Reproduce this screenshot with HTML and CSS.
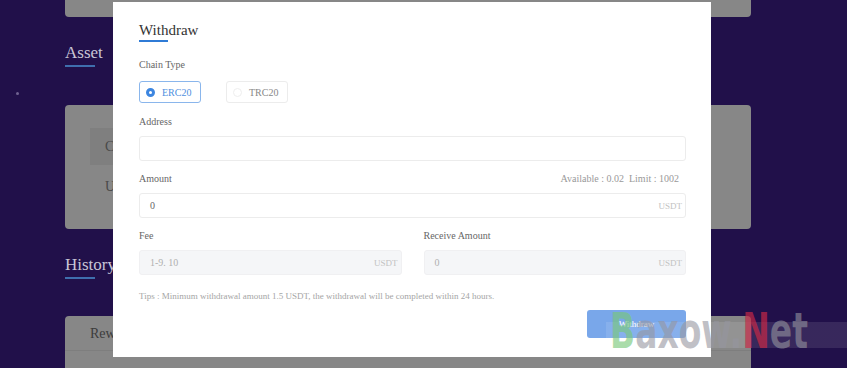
FILE: index.html
```html
<html>
<head>
<meta name="viewport" content="width=device-width, initial-scale=1">
<title>Withdraw</title>
<link rel="stylesheet" href="styles.css">
</head>
<body>

<div class="page">
	<div class="card card-top"></div>

	<div class="sec-title">Asset</div>
	<div class="sec-line"></div>
	<div class="card card-asset">
		<div class="asset-tab">Coin</div>
		<div class="asset-row">USDT</div>
	</div>

	<div class="sec-title">History</div>
	<div class="sec-line"></div>
	<div class="card card-history">
		<div class="history-head">Reward</div>
	</div>
</div>

<div class="star"></div>

<div class="modal">
	<div class="modal-title">Withdraw</div>
	<div class="title-line"></div>

	<div class="label first">Chain Type</div>
	<div class="chains">
		<div class="chain active"><span class="dot"></span>ERC20</div>
		<div class="chain"><span class="dot"></span>TRC20</div>
	</div>

	<div class="label">Address</div>
	<div class="input"></div>

	<div class="label split">
		<span>Amount</span>
		<span class="avail">Available : 0.02 &nbsp;Limit : 1002</span>
	</div>
	<div class="input"><span>0</span><span class="unit">USDT</span></div>

	<div class="pair">
		<div class="col">
			<div class="label">Fee</div>
			<div class="input disabled"><span class="muted">1-9. 10</span><span class="unit">USDT</span></div>
		</div>
		<div class="col">
			<div class="label">Receive Amount</div>
			<div class="input disabled"><span class="muted">0</span><span class="unit">USDT</span></div>
		</div>
	</div>

	<div class="tips">Tips : Minimum withdrawal amount 1.5 USDT, the withdrawal will be completed within 24 hours.</div>

	<div class="actions">
		<div class="btn">Withdraw</div>
	</div>
</div>

<div class="watermark">
	<svg width="241" height="66" viewBox="0 0 241 66">
		<text class="wm-text" x="4" y="50" textLength="198" lengthAdjust="spacingAndGlyphs"><tspan class="wm-b">B</tspan>axow.<tspan class="wm-n">N</tspan>et</text>
	</svg>
</div>

</body>
</html>
```

FILE: styles.css
```css
body {
	margin: 0;
	background-color: #21104a;
	font-family: "Liberation Serif", "Times New Roman", serif;
	width: 847px;
	height: 368px;
	overflow: hidden;
	position: relative;
}

.page {
	width: 686px;
	margin-left: 65px;
	height: 368px;
	overflow: hidden;
}

.card {
	background-color: #878787;
	border-radius: 4px;
}

.card-top {
	height: 17px;
	border-radius: 0 0 4px 4px;
}

.sec-title {
	color: #c9c6d6;
	font-size: 17px;
	line-height: 20px;
	margin-top: 26px;
}

.sec-line {
	width: 30px;
	height: 2px;
	margin-top: 2px;
	background-color: #3f6fae;
}

.card-asset {
	margin-top: 38px;
	height: 124px;
	padding: 23px 0 0 25px;
	box-sizing: border-box;
}

.asset-tab {
	width: 140px;
	height: 37px;
	background-color: #7f7f7f;
	color: #4a4a4a;
	font-size: 14px;
	line-height: 37px;
	padding-left: 15px;
	box-sizing: border-box;
}

.asset-row {
	color: #4a4a4a;
	font-size: 14px;
	margin-top: 14px;
	padding-left: 15px;
}

.card-history {
	margin-top: 37px;
	height: 60px;
	border-radius: 4px 4px 0 0;
}

.history-head {
	height: 34px;
	line-height: 36px;
	padding-left: 25px;
	color: #3c3c3c;
	font-size: 14px;
	border-bottom: 1px solid #7e7e7e;
}

.star {
	position: absolute;
	left: 16px;
	top: 92px;
	width: 3px;
	height: 3px;
	border-radius: 50%;
	background-color: #6f6290;
}

/* dialog */
.modal {
	position: absolute;
	left: 113px;
	top: 2px;
	width: 598px;
	height: 355px;
	box-sizing: border-box;
	padding: 18px 25px 0 26px;
	background-color: #fff;
}

.modal-title {
	font-size: 15px;
	line-height: 20px;
	color: #333;
}

.title-line {
	width: 29px;
	height: 2px;
	background-color: #2f7bd6;
}

.label {
	font-size: 10px;
	line-height: 14px;
	color: #666;
	margin-top: 11px;
	margin-bottom: 7px;
}

.label.first {
	margin-top: 16px;
	margin-bottom: 9px;
}

.label.split {
	display: flex;
	justify-content: space-between;
}

.avail {
	color: #999;
	padding-right: 7px;
}

.chains {
	display: flex;
	gap: 25px;
	margin-bottom: 12px;
}

.chain {
	width: 62px;
	height: 22px;
	box-sizing: border-box;
	border: 1px solid #ececec;
	border-radius: 3px;
	display: flex;
	align-items: center;
	padding-left: 6px;
	gap: 7px;
	font-size: 10px;
	color: #888;
}

.chain .dot {
	width: 9px;
	height: 9px;
	box-sizing: border-box;
	border-radius: 50%;
	border: 1px solid #eee;
}

.chain.active {
	border-color: #8ab6ec;
	color: #4f8fe0;
}

.chain.active .dot {
	border: 3px solid #3d86e0;
	background-color: #fff;
}

.input {
	height: 25px;
	box-sizing: border-box;
	border: 1px solid #ececec;
	border-radius: 3px;
	display: flex;
	align-items: center;
	justify-content: space-between;
	padding: 0 3px 0 10px;
	font-size: 10px;
	color: #666;
}

.input.disabled {
	background-color: #f5f6f8;
	border-color: #f0f0f2;
}

.muted {
	color: #b0b0b0;
}

.unit {
	font-size: 9px;
	color: #c2c2c2;
}

.pair {
	display: flex;
	gap: 22px;
}

.col {
	flex: 1;
}

.tips {
	font-size: 9px;
	line-height: 14px;
	color: #a5a5a5;
	margin-top: 14px;
}

.actions {
	display: flex;
	justify-content: flex-end;
	margin-top: 7px;
}

.btn {
	width: 99px;
	height: 28px;
	line-height: 28px;
	text-align: center;
	border-radius: 3px;
	background-color: #79a7ea;
	color: #fff;
	font-size: 9px;
}

/* site watermark */
.watermark {
	position: absolute;
	left: 606px;
	top: 298px;
	width: 241px;
	height: 66px;
	background: linear-gradient(to bottom, transparent 24px, rgba(255, 255, 255, 0.1) 24px, rgba(255, 255, 255, 0.1) 50px, transparent 50px);
}

.watermark svg {
	display: block;
}

.wm-text {
	font-family: "DejaVu Sans", sans-serif;
	font-weight: bold;
	font-size: 50px;
	fill: rgba(150, 150, 160, 0.6);
}

.wm-b {
	fill: rgba(120, 200, 120, 0.65);
}

.wm-n {
	fill: rgba(200, 40, 70, 0.7);
}
```
